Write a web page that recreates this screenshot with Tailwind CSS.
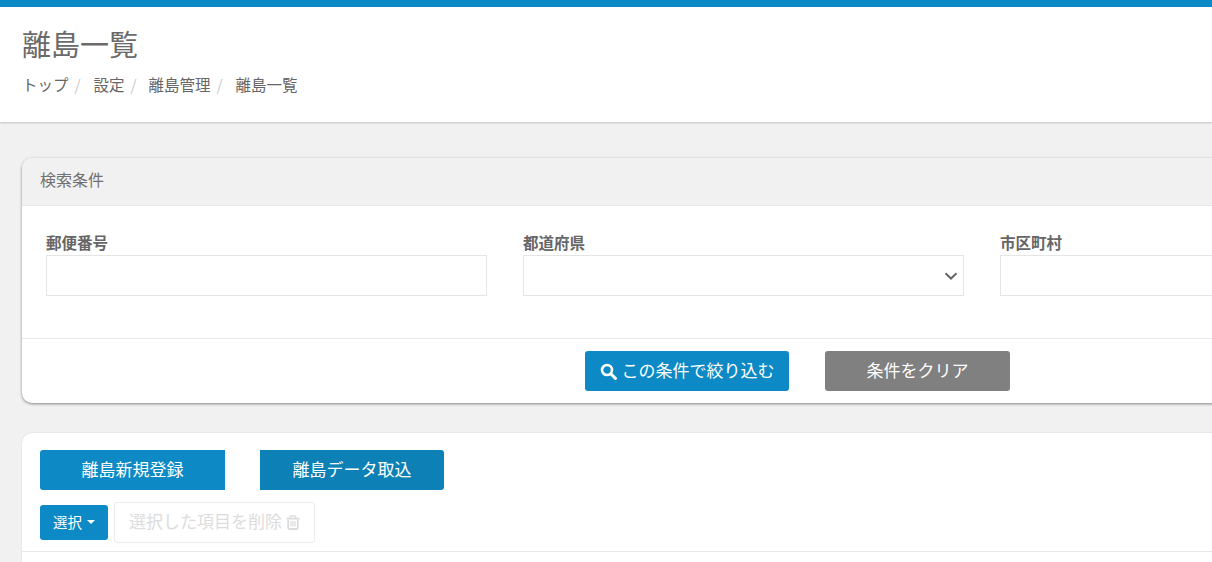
<!DOCTYPE html>
<html lang="ja">
<head>
<meta charset="utf-8">
<script src="https://cdn.jsdelivr.net/npm/@tailwindcss/browser@4"></script>
</head>
<body class="h-[562px] w-[1212px] overflow-hidden bg-[#f1f1f1] font-['Noto_Sans_CJK_JP','Noto_Sans',sans-serif] text-[#666]">
<header class="h-[122px] border-t-[7px] border-[#0d8ac5] bg-white pl-[22px] shadow-[0_1px_2px_rgba(0,0,0,0.2)]">
  <h1 class="pt-[18px] text-[29px] leading-[36px] font-normal text-[#6a6a6a]">離島一覧</h1>
  <nav class="mt-[11px] flex text-[15.5px] leading-[24px] text-[#666]">
    <span>トップ</span><span class="ml-[6px] w-[19px] text-[#ccc]">/</span>
    <span>設定</span><span class="ml-[6px] w-[18px] text-[#ccc]">/</span>
    <span>離島管理</span><span class="ml-[6px] w-[19px] text-[#ccc]">/</span>
    <span>離島一覧</span>
  </nav>
</header>
<main class="w-[1340px] pt-[36px] pl-[22px]">
  <section class="h-[245px] rounded-[10px] bg-white shadow-[0_1px_3px_rgba(0,0,0,0.45)]">
    <div class="h-[48px] rounded-t-[10px] border-b border-[#e8e8e8] bg-[#f1f1f1] pl-[18px] text-[16px] leading-[43px] text-[#707070]">検索条件</div>
    <div class="flex h-[133px] gap-[36px] border-b border-[#e8e8e8] pt-[27px] pl-[24px]">
      <div class="w-[441px] shrink-0">
        <label class="block h-[22px] text-[15.5px] leading-[19px] font-bold text-[#666]">郵便番号</label>
        <div class="h-[41px] border border-[#e5e5e5] bg-white"></div>
      </div>
      <div class="w-[441px] shrink-0">
        <label class="block h-[22px] text-[15.5px] leading-[19px] font-bold text-[#666]">都道府県</label>
        <div class="flex h-[41px] items-center justify-end border border-[#e5e5e5] bg-white pr-[5px]">
          <svg width="14" height="8" viewBox="0 0 14 8" fill="none" stroke="#666" stroke-width="2"><path d="M1.5 1.2 7 6.5l5.5-5.3"/></svg>
        </div>
      </div>
      <div class="w-[441px] shrink-0">
        <label class="block h-[22px] text-[15.5px] leading-[19px] font-bold text-[#666]">市区町村</label>
        <div class="h-[41px] border border-[#e5e5e5] bg-white"></div>
      </div>
    </div>
    <div class="flex gap-[36px] pt-[12px] pl-[563px]">
      <button class="flex h-[40px] w-[204px] items-center justify-center gap-[5px] rounded-[3px] bg-[#0d8ac5] pb-[3px] text-[17px] text-white">
        <svg class="mt-[3px]" width="17" height="17" viewBox="0 0 17 17" fill="none" stroke="#fff"><circle cx="7" cy="7" r="5" stroke-width="2.6"/><path d="m10.8 10.8 4.6 4.6" stroke-width="3" stroke-linecap="round"/></svg>
        <span>この条件で絞り込む</span>
      </button>
      <button class="h-[40px] w-[185px] rounded-[3px] bg-[#808080] pb-[3px] text-[17px] text-white">条件をクリア</button>
    </div>
  </section>
  <section class="mt-[30px] h-[200px] rounded-t-[10px] bg-white pt-[17px] shadow-[0_0_2px_rgba(0,0,0,0.12)]">
    <div class="flex gap-[35px] pl-[18px]">
      <button class="h-[40px] w-[185px] rounded-l-[3px] bg-[#0d8ac5] pb-[3px] text-[17px] text-white">離島新規登録</button>
      <button class="h-[40px] w-[184px] rounded-r-[3px] bg-[#0d80b5] pb-[3px] text-[17px] text-white">離島データ取込</button>
    </div>
    <div class="mt-[12px] flex h-[50px] items-start gap-[6px] border-b border-[#e8e8e8] pl-[18px]">
      <button class="mt-[3px] flex h-[35px] w-[68px] items-center justify-center gap-[5px] rounded-[3px] bg-[#0d8ac5] pb-[1px] text-[14.5px] text-white">
        <span>選択</span><span class="h-0 w-0 border-x-[4px] border-t-[4px] border-x-transparent border-t-white"></span>
      </button>
      <button class="flex h-[41px] w-[201px] items-center justify-center gap-[4px] rounded-[3px] border border-[#ececec] bg-white pb-[3px] text-[17px] text-[#dcdcdc]">
        <span>選択した項目を削除</span>
        <svg class="mt-[3px]" width="14" height="15" viewBox="0 0 14 15" fill="none" stroke="#dcdcdc"><path d="M2.2 4.5v8.3c0 .8.5 1.2 1.2 1.2h7.2c.8 0 1.2-.4 1.2-1.2V4.5" stroke-width="1.8"/><path d="M.5 3.6h13M4.2 3.4V2c0-.6.4-1 1-1h3.6c.6 0 1 .4 1 1v1.4" stroke-width="1.6"/><path d="M5 6v5.5M7 6v5.5M9 6v5.5" stroke-width="1.2"/></svg>
      </button>
    </div>
  </section>
</main>
</body>
</html>
